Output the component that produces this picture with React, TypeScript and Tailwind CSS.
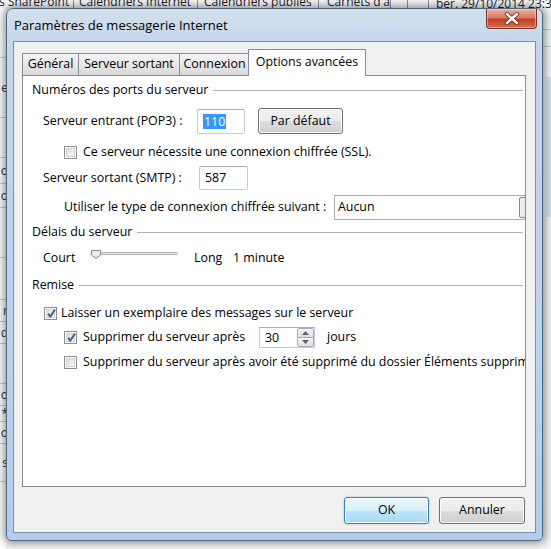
import React from "react";

const leftRows = [
  { h: "h-[50px]", t: "" },
  { h: "h-[60px]", t: "e" },
  { h: "h-[40px]", t: "" },
  { h: "h-[26px]", t: "o" },
  { h: "h-[24px]", t: "o" },
  { h: "h-[50px]", t: "" },
  { h: "h-[42px]", t: "" },
  { h: "h-[22px]", t: "r" },
  { h: "h-[22px]", t: "d" },
  { h: "h-[40px]", t: "" },
  { h: "h-[22px]", t: "o" },
  { h: "h-[16px]", t: "*" },
  { h: "h-[22px]", t: "o" },
  { h: "h-[38px]", t: "s" },
];

function Checkbox({ checked }: { checked?: boolean }) {
  return (
    <span className="relative flex h-[13px] w-[13px] shrink-0 border border-[#8e8f8f] bg-white">
      <span className="m-[1px] flex-1 border border-[#cfd2d6] bg-gradient-to-br from-[#dcdcdc] to-[#fbfbfb]" />
      {checked && (
        <svg className="absolute left-[1px] top-0" width="11" height="11" viewBox="0 0 11 11">
          <path d="M2.2 5.6 L4.3 8.6 L9 1.6" stroke="#4a5f97" strokeWidth="2" fill="none" strokeLinejoin="round" />
        </svg>
      )}
    </span>
  );
}

function GroupHeader({ title, className }: { title: string; className?: string }) {
  return (
    <div className={"flex h-[17px] items-center pl-[9px] pr-[2px] " + (className ?? "")}>
      <span className="whitespace-nowrap">{title}</span>
      <span className="ml-[5px] h-px flex-1 bg-[#b4b4b4]" />
    </div>
  );
}

function TextBox({ children, className }: { children: React.ReactNode; className: string }) {
  return (
    <div
      className={
        "flex items-center rounded-[2px] border border-[#c3cbd6] border-t-[#abadb3] bg-white pl-[5px] " + className
      }
    >
      {children}
    </div>
  );
}

export default function App() {
  return (
    <div className="relative h-[549px] w-[551px] overflow-hidden bg-[#f4f5f7] font-['Open_Sans',sans-serif] text-[12.4px] text-black">
      {/* outlook window behind the dialog */}
      <div className="flex h-[8px] overflow-hidden bg-[#f7f8fa] text-[12px] text-[#1e1e1e]">
        <div className="-mt-[6px] flex whitespace-nowrap leading-[16px]">
          <span className="-ml-[1px] w-[75px] border-r border-[#8d959e]">s SharePoint</span>
          <span className="w-[124px] border-r border-[#8d959e] pl-[5px]">Calendriers Internet</span>
          <span className="w-[121px] border-r border-[#8d959e] pl-[6px]">Calendriers publiés</span>
          <span className="w-[72px] overflow-hidden border-r border-[#8d959e] pl-[8px]">Carnets d'adresses</span>
          <span className="w-[17px] border-r border-[#8d959e]" />
          <span className="w-[21px] border-r border-[#8d959e]" />
          <span className="mt-[2px] pl-[7px]">ber. 29/10/2014 23:35</span>
        </div>
      </div>
      <div className="flex h-[541px]">
        <div className="flex w-[6px] flex-col bg-white text-[12px]">
          {leftRows.map((r, i) => (
            <div
              key={i}
              className={"flex items-center justify-end overflow-hidden border-b border-[#c9cdd2] " + r.h}
            >
              <span className="-mr-[2px] text-[#333]">{r.t}</span>
            </div>
          ))}
        </div>
        <div className="flex-1" />
        <div className="flex w-[8px] flex-col bg-[#f1f3f6]">
          <div className="h-[22px] border-b border-[#c4cad1]" />
          <div className="h-[17px] border-b border-[#c4cad1]" />
          <div className="ml-[3px] mt-[30px] h-[140px] bg-[#d6e2ef]" />
        </div>
      </div>

      {/* dialog window */}
      <div className="absolute left-[6px] top-[8px] flex h-[533px] w-[537px] flex-col rounded-t-[7px] rounded-b-[5px] border border-[#4d6882] bg-[linear-gradient(180deg,#d3dfec_0%,#c3d5ea_8%,#bcd3ec_60%,#b3cdea_100%)] px-[6px] pb-[7px] shadow-[0_0_8px_2px_rgba(0,0,0,0.45)]">
        <div className="flex h-[32px] items-start">
          <span className="mt-[8px] flex-1 pl-px text-[13px] leading-[16px]">Paramètres de messagerie Internet</span>
          <div className="-mr-[1px] flex h-[20px] w-[51px] items-center justify-center rounded-b-[4px] border border-t-0 border-[#74342a] bg-[linear-gradient(180deg,#eab1a3_0%,#da7a63_45%,#c5401f_55%,#d2704f_100%)] shadow-[inset_0_0_0_1px_rgba(255,220,210,0.5)]">
            <svg width="16" height="13" viewBox="0 0 16 13">
              <path d="M3 2 L13 11 M13 2 L3 11" stroke="#5a231a" strokeWidth="4.2" strokeLinecap="round" />
              <path d="M3 2 L13 11 M13 2 L3 11" stroke="#ffffff" strokeWidth="2.6" strokeLinecap="round" />
            </svg>
          </div>
        </div>

        <div className="flex flex-1 flex-col border border-[#7d8ea3] bg-[#f0f0f0] pb-[8px] pl-[8px] pr-[9px] pt-[7px]">
          {/* tabs */}
          <div className="flex h-[26px] items-start">
            <div className="mt-[4px] flex h-[22px] w-[57px] items-center justify-center border border-b-0 border-[#898c95] bg-gradient-to-b from-[#f5f5f5] to-[#d9d9d9]">
              Général
            </div>
            <div className="-ml-px mt-[4px] flex h-[22px] w-[102px] items-center justify-center border border-b-0 border-[#898c95] bg-gradient-to-b from-[#f5f5f5] to-[#d9d9d9]">
              Serveur sortant
            </div>
            <div className="-ml-px mt-[4px] flex h-[22px] w-[71px] items-center justify-center border border-b-0 border-[#898c95] bg-gradient-to-b from-[#f5f5f5] to-[#d9d9d9]">
              Connexion
            </div>
            <div className="relative z-10 -ml-[2px] flex h-[27px] w-[118px] items-center justify-center border border-b-0 border-[#898c95] bg-white pb-[2px]">
              Options avancées
            </div>
          </div>

          {/* panel */}
          <div className="flex h-[412px] flex-col overflow-hidden border border-[#898c95] bg-white pt-[6px]">
            <GroupHeader title="Numéros des ports du serveur" />
            <div className="mt-[9px] flex h-[26px] items-center pl-[20px]">
              <span className="w-[154px] whitespace-nowrap">Serveur entrant (POP3) :</span>
              <TextBox className="h-[25px] w-[48px] border-[#b8c6d8]">
                <span className="bg-[#3399ff] px-px leading-[15px] text-white">110</span>
              </TextBox>
              <button className="ml-[13px] h-[26px] w-[85px] rounded-[3px] border border-[#707070] bg-[linear-gradient(180deg,#f2f2f2_0%,#ebebeb_50%,#dddddd_50%,#cfcfcf_100%)] shadow-[inset_0_0_0_1px_#fbfbfb]">
                Par défaut
              </button>
            </div>
            <div className="mt-[10px] flex h-[16px] items-center pl-[41px]">
              <Checkbox />
              <span className="ml-[6px] whitespace-nowrap">Ce serveur nécessite une connexion chiffrée (SSL).</span>
            </div>
            <div className="mt-[6px] flex h-[24px] items-center pl-[20px]">
              <span className="w-[156px] whitespace-nowrap">Serveur sortant (SMTP) :</span>
              <TextBox className="h-[24px] w-[49px]">
                <span>587</span>
              </TextBox>
            </div>
            <div className="mt-[5px] flex h-[25px] items-center pl-[41px]">
              <span className="w-[270px] shrink-0 whitespace-nowrap">Utiliser le type de connexion chiffrée suivant :</span>
              <div className="flex h-[25px] w-[210px] shrink-0 items-center border border-[#abadb3] bg-white">
                <span className="flex-1 pl-[3px]">Aucun</span>
                <span className="mr-[8px] h-[21px] w-[16px] rounded-[2px] border border-[#8a8a8a] bg-gradient-to-r from-[#f2f2f2] to-[#d6d6d6]" />
              </div>
            </div>

            <GroupHeader title="Délais du serveur" className="mt-[4px]" />
            <div className="mt-[7px] flex h-[20px] items-center pl-[20px]">
              <span className="w-[47px]">Court</span>
              <svg width="88" height="12" viewBox="0 0 88 12" className="mb-[6px]">
                <rect x="1" y="3.5" width="86" height="2" fill="#e6e6e6" stroke="#b3b3b3" strokeWidth="1" />
                <path d="M1.5 1.5 H10.5 V6 L6 9.5 L1.5 6 Z" fill="#ececec" stroke="#8c8c8c" strokeWidth="1" />
              </svg>
              <span className="ml-[16px] w-[39px]">Long</span>
              <span>1 minute</span>
            </div>

            <GroupHeader title="Remise" className="mt-[9px]" />
            <div className="mt-[11px] flex h-[16px] items-center pl-[21px]">
              <Checkbox checked />
              <span className="ml-[4px] whitespace-nowrap">Laisser un exemplaire des messages sur le serveur</span>
            </div>
            <div className="mt-[6px] flex h-[21px] items-center pl-[41px]">
              <Checkbox checked />
              <span className="ml-[6px] w-[176px] whitespace-nowrap">Supprimer du serveur après</span>
              <div className="flex h-[21px] w-[56px] border border-[#c3cbd6] border-t-[#abadb3] bg-white">
                <span className="flex-1 pl-[5px] leading-[19px]">30</span>
                <div className="flex w-[17px] flex-col">
                  <div className="flex flex-1 items-center justify-center rounded-t-[2px] border border-[#a7acb3] bg-gradient-to-b from-[#f6f6f6] to-[#dedede]">
                    <svg width="7" height="4" viewBox="0 0 7 4">
                      <path d="M0 4 L3.5 0 L7 4 Z" fill="#52607a" />
                    </svg>
                  </div>
                  <div className="-mt-px flex flex-1 items-center justify-center rounded-b-[2px] border border-[#a7acb3] bg-gradient-to-b from-[#f6f6f6] to-[#dedede]">
                    <svg width="7" height="4" viewBox="0 0 7 4">
                      <path d="M0 0 L3.5 4 L7 0 Z" fill="#52607a" />
                    </svg>
                  </div>
                </div>
              </div>
              <span className="ml-[12px]">jours</span>
            </div>
            <div className="mt-[6px] flex h-[16px] items-center pl-[41px]">
              <Checkbox />
              <span className="ml-[6px] whitespace-nowrap">
                Supprimer du serveur après avoir été supprimé du dossier Éléments supprimés
              </span>
            </div>
          </div>

          {/* buttons */}
          <div className="mt-[10px] flex justify-end gap-[10px] pr-px">
            <button className="h-[27px] w-[85px] rounded-[3px] border border-[#3c7fb1] bg-[linear-gradient(180deg,#eaf6fd_0%,#d9f0fc_50%,#bee6fd_50%,#a7d9f5_100%)] shadow-[inset_0_0_0_1px_#ffffff,0_0_2px_#7fc3ef]">
              OK
            </button>
            <button className="h-[27px] w-[86px] rounded-[3px] border border-[#707070] bg-[linear-gradient(180deg,#f2f2f2_0%,#ebebeb_50%,#dddddd_50%,#cfcfcf_100%)] shadow-[inset_0_0_0_1px_#fbfbfb]">
              Annuler
            </button>
          </div>
        </div>
      </div>
    </div>
  );
}
